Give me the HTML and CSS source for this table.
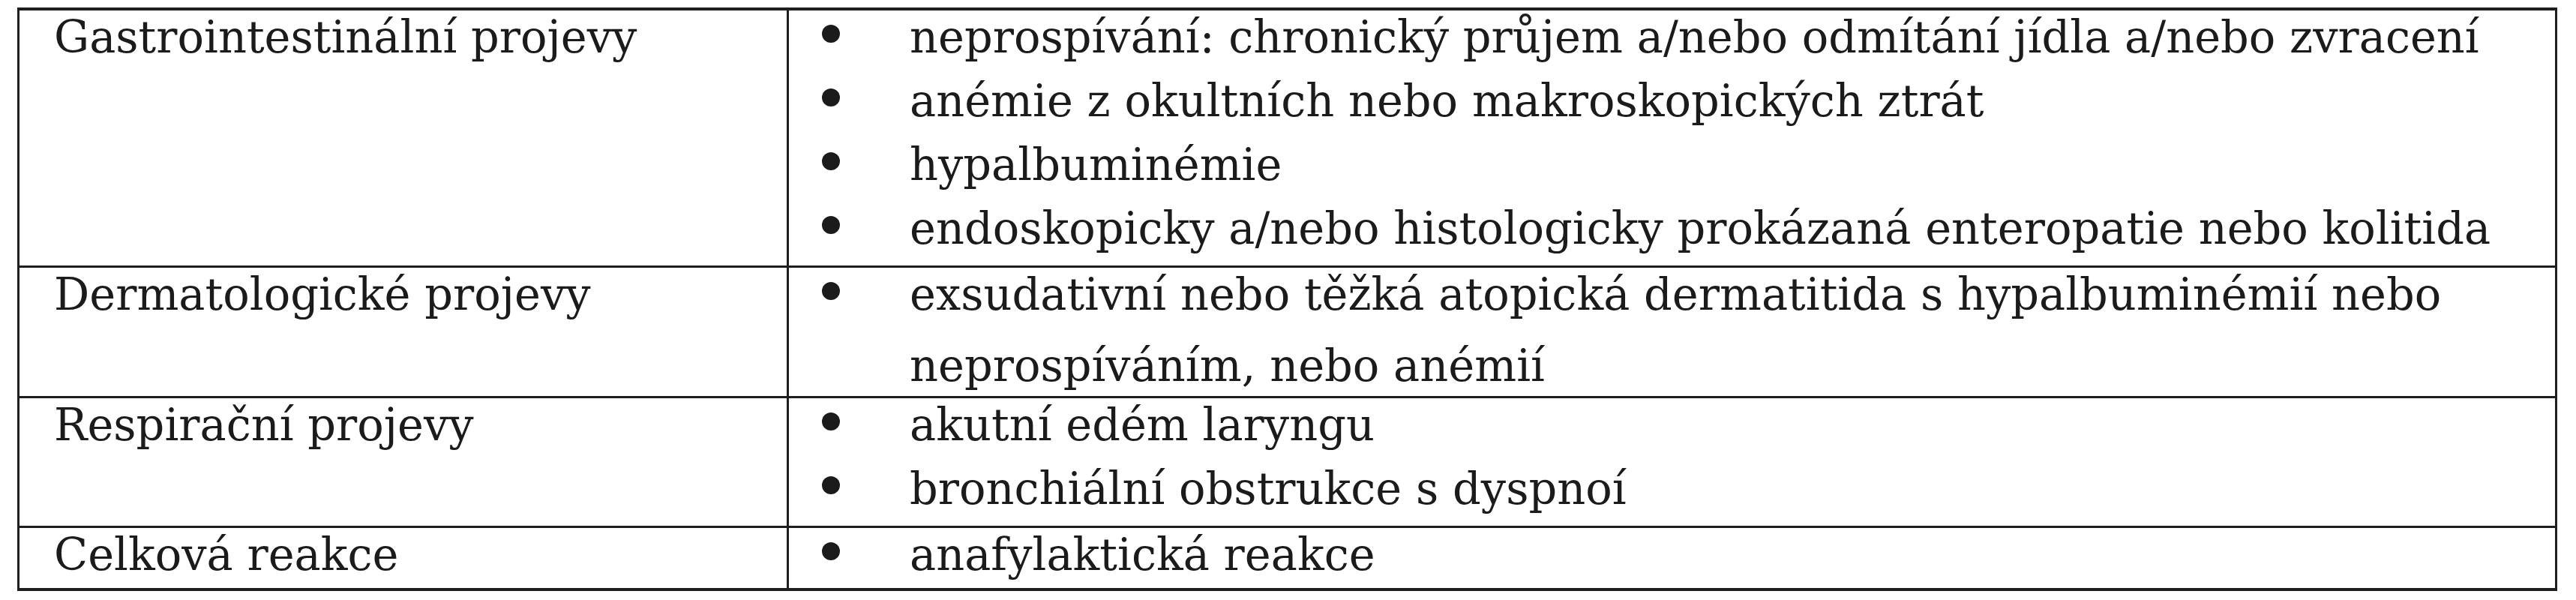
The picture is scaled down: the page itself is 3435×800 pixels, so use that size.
FILE: index.html
```html
<!DOCTYPE html>
<html lang="cs">
<head>
<meta charset="utf-8">
<title>Projevy</title>
<link rel="stylesheet" href="styles.css">
</head>
<body>
<table class="grid">
  <colgroup><col class="col-label"><col class="col-items"></colgroup>
  <tbody>
    <tr class="row-first">
      <td class="label">Gastrointestinální projevy</td>
      <td class="items">
        <ul class="list">
          <li><span>neprospívání: chronický průjem a/nebo odmítání jídla a/nebo zvracení</span></li>
          <li><span>anémie z okultních nebo makroskopických ztrát</span></li>
          <li><span>hypalbuminémie</span></li>
          <li><span>endoskopicky a/nebo histologicky prokázaná enteropatie nebo kolitida</span></li>
        </ul>
      </td>
    </tr>
    <tr>
      <td class="label">Dermatologické projevy</td>
      <td class="items">
        <ul class="list">
          <li class="wrap"><span>exsudativní nebo těžká atopická dermatitida s hypalbuminémií nebo<br>neprospíváním, nebo anémií</span></li>
        </ul>
      </td>
    </tr>
    <tr>
      <td class="label">Respirační projevy</td>
      <td class="items">
        <ul class="list">
          <li><span>akutní edém laryngu</span></li>
          <li><span>bronchiální obstrukce s dyspnoí</span></li>
        </ul>
      </td>
    </tr>
    <tr class="row-last">
      <td class="label">Celková reakce</td>
      <td class="items">
        <ul class="list">
          <li><span>anafylaktická reakce</span></li>
        </ul>
      </td>
    </tr>
  </tbody>
</table>
</body>
</html>
```
FILE: styles.css
```css
html, body {
  margin: 0;
  padding: 0;
  background: #ffffff;
}

body {
  padding: 10px 0 0 23px;
  font-family: "DejaVu Serif", "Liberation Serif", serif;
  font-size: 59px;
  color: #1b1b1b;
}

.grid {
  border-collapse: collapse;
  table-layout: fixed;
  width: 3387px;
}

.col-label {
  width: 1026px;
}

.grid td {
  border: 3px solid #1e1e1e;
  vertical-align: top;
  padding: 0;
}

.row-first td {
  border-top-width: 4px;
}

.row-last td {
  border-bottom-width: 4px;
}

.grid td.label {
  padding: 0 0 14px 46px;
  line-height: 71px;
  white-space: nowrap;
}

.list {
  list-style: none;
  margin: 0;
  padding: 0;
}

.list li {
  display: flex;
  align-items: flex-start;
  line-height: 71px;
  padding-bottom: 14px;
}

.row-last .list li {
  padding-bottom: 9px;
}

.grid .row-last td.label {
  padding-bottom: 9px;
}

.list li::before {
  content: "";
  flex: none;
  width: 24px;
  height: 24px;
  border-radius: 50%;
  background: #1b1b1b;
  margin: 19px 93px 0 44px;
}

.list li.wrap {
  line-height: 95px;
  margin: -12px 0 -7px;
  padding-bottom: 0;
}

.list li.wrap::before {
  margin-top: 31px;
}
```
